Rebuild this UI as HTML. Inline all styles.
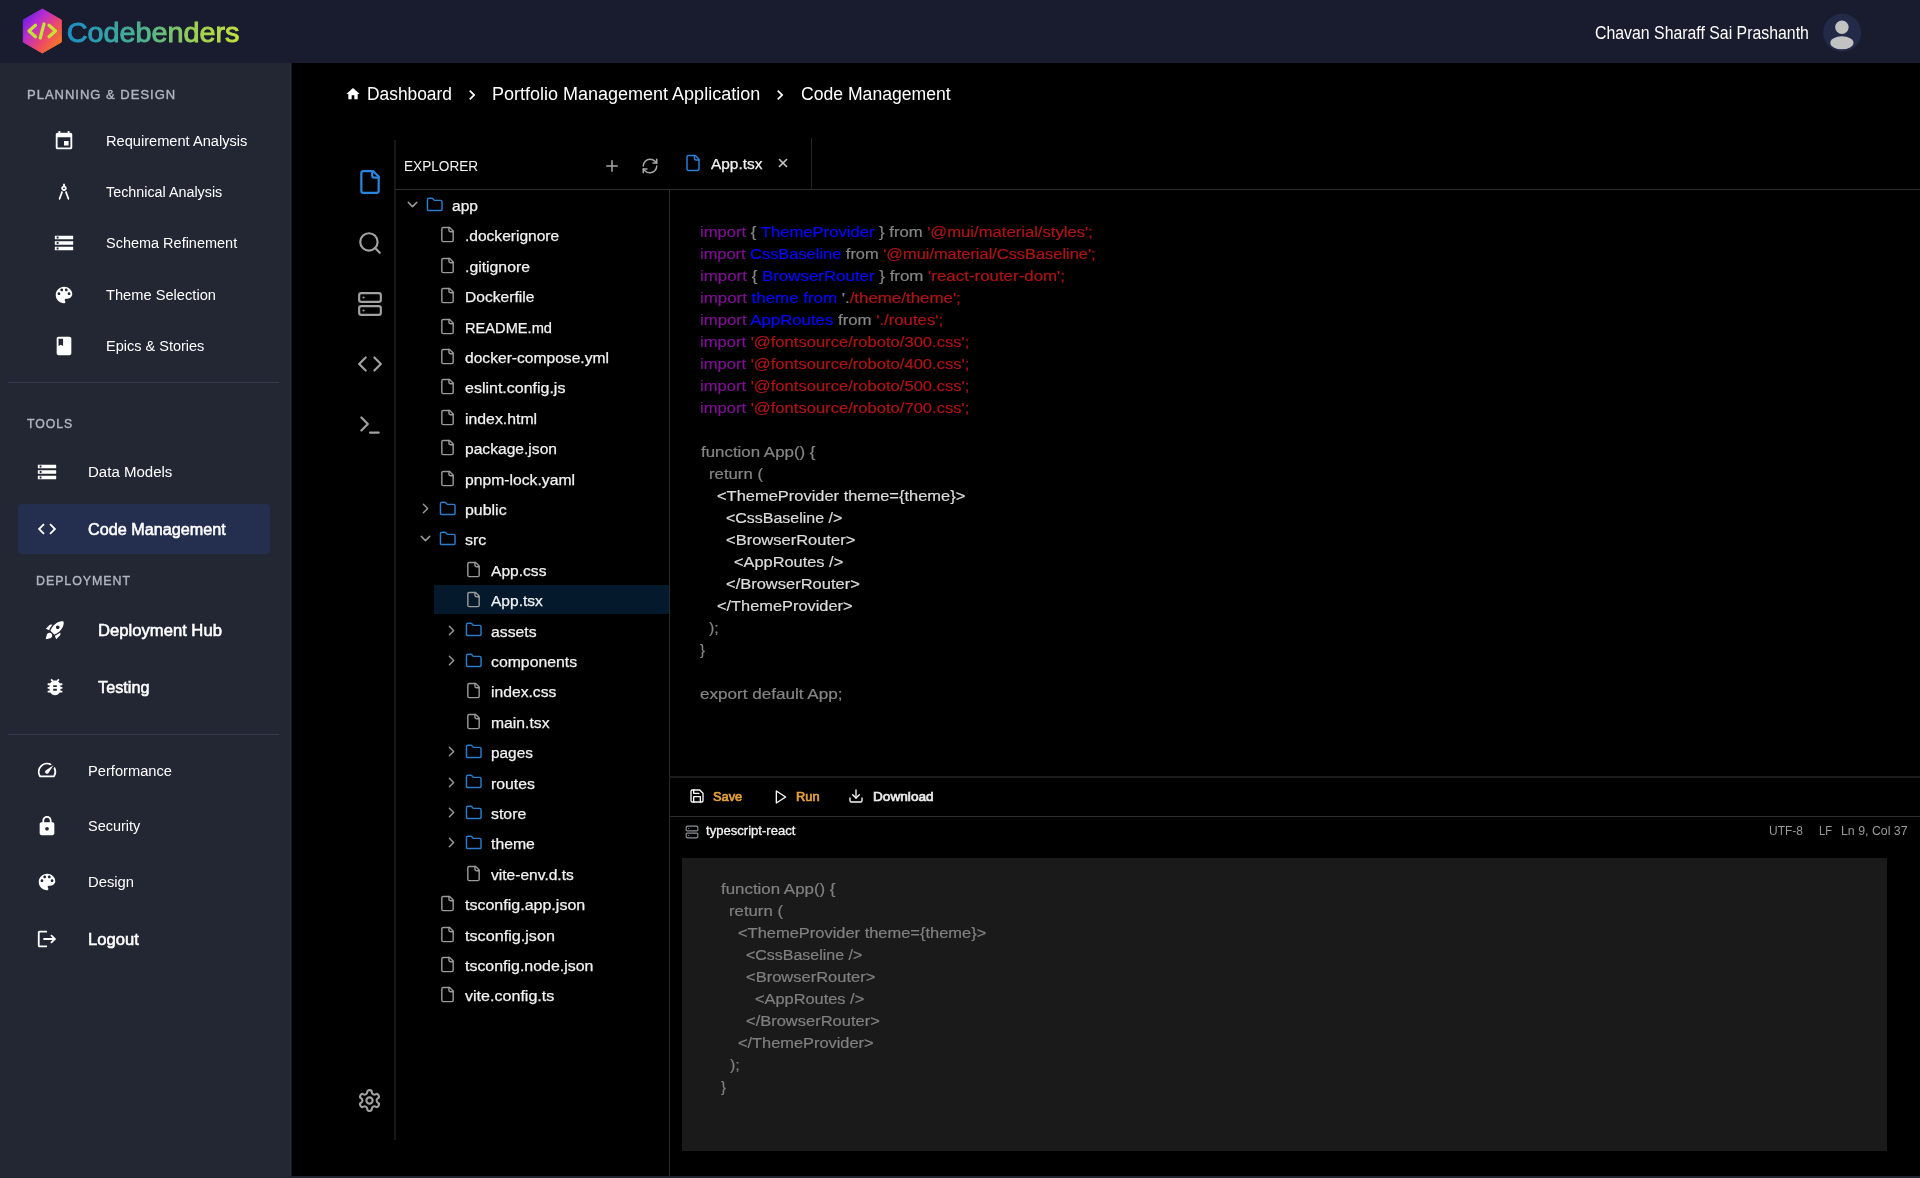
<!DOCTYPE html>
<html lang="en"><head><meta charset="utf-8"><title>Codebenders - Code Management</title>
<style>
*{box-sizing:border-box;margin:0;padding:0}
html,body{width:1920px;height:1178px;overflow:hidden;background:#000}
body{font-family:"Liberation Sans",sans-serif;position:relative;color:#fff}
.abs{position:absolute}
.ic{position:absolute;display:block}
.t{position:absolute;height:40px;line-height:40px;white-space:pre;transform-origin:0 50%}
.ln{position:absolute;background:#2a2a2a}
#header{position:absolute;left:0;top:0;width:1920px;height:63px;background:#191c2e}
#sidebar{position:absolute;left:0;top:63px;width:291px;height:1115px;background:#222733;border-right:1px solid #2a303c}
.tr{-webkit-text-stroke-width:0.25px}.cd{-webkit-text-stroke-width:0.2px}.tb{font-weight:400 !important;-webkit-text-stroke-width:0.65px}.sbw{-webkit-text-stroke-width:0.3px}.nb{font-weight:400 !important;-webkit-text-stroke:0.55px #fff}.sh{font-weight:400 !important;-webkit-text-stroke:0.4px #b0b5c0}
.code{position:absolute;white-space:pre;font-size:16px;line-height:22px;letter-spacing:-0.1px}
.kw{color:#7d0f90}.id{color:#0606ff}.st{color:#ae1414}.gr{color:#868686}.wh{color:#dcdcdc}
#root{position:absolute;left:0;top:0;width:1920px;height:1178px;will-change:transform}
</style></head><body><div id="root">

<div id="header"></div>
<svg class="ic" style="left:16px;top:2px" width="60" height="58" viewBox="16 2 60 58">
<defs><linearGradient id="hg" x1="24" y1="16" x2="61" y2="46" gradientUnits="userSpaceOnUse">
<stop offset="0" stop-color="#6a1fe6"/><stop offset="0.3" stop-color="#b82cd0"/><stop offset="0.65" stop-color="#ee4a66"/><stop offset="1" stop-color="#f8801a"/></linearGradient>
<linearGradient id="tg" x1="66" y1="0" x2="240" y2="0" gradientUnits="userSpaceOnUse">
<stop offset="0" stop-color="#1a8ec6"/><stop offset="0.45" stop-color="#4fb38c"/><stop offset="0.75" stop-color="#9fd152"/><stop offset="1" stop-color="#c4e23e"/></linearGradient></defs>
<path d="M42.3 9 L61.3 19.900 L61.300 42.100 L42.300 53 L23.300 42.100 L23.300 19.900 Z" fill="url(#hg)" stroke="url(#hg)" stroke-width="1" stroke-linejoin="round"/>
<g fill="none" stroke="#c6e234" stroke-width="3.200" stroke-linecap="round" stroke-linejoin="round"><path d="M35.500 25.200 L29 31 L35.500 36.800"/><path d="M44 24 L40.200 38"/><path d="M49 25.200 L55.500 31 L49 36.800"/></g>
</svg>
<svg class="ic" style="left:60px;top:8px" width="190" height="46" viewBox="60 8 190 46"><text x="66.7" y="41.5" font-family="'Liberation Sans',sans-serif" font-size="27" font-weight="400" fill="url(#tg)" stroke="url(#tg)" stroke-width="0.9" textLength="172.8" lengthAdjust="spacingAndGlyphs">Codebenders</text></svg>
<div class="t" style="left:1595.20px;top:13.00px;font-size:17.5px;color:#fff;transform:scaleX(0.9060);">Chavan Sharaff Sai Prashanth</div>
<svg class="ic" style="left:1820px;top:10px" width="46" height="46" viewBox="1820 10 46 46"><circle cx="1842.2" cy="32.700" r="19" fill="#222a48"/><circle cx="1841.900" cy="27.300" r="6.700" fill="#c2c2c2"/><ellipse cx="1841.900" cy="42.800" rx="11.600" ry="6.500" fill="#c2c2c2"/></svg>
<div id="sidebar"></div><div class="abs" style="left:291px;top:63px;width:1px;height:1113px;background:#11141a"></div>
<div class="t sh" style="left:27.00px;top:74.50px;font-size:13px;color:#b0b5c0;font-weight:700;letter-spacing:1.000px;">PLANNING &amp; DESIGN</div>
<svg class="ic" style="left:53.00px;top:129.50px" width="22" height="22" viewBox="0 0 24 24" fill="#fff"><path d="M17 12h-5v5h5v-5zM16 1v2H8V1H6v2H5c-1.11 0-1.99.9-1.99 2L3 19c0 1.1.89 2 2 2h14c1.1 0 2-.9 2-2V5c0-1.1-.9-2-2-2h-1V1h-2zm3 18H5V8h14v11z"/></svg>
<div class="t nv" style="left:106.20px;top:120.80px;font-size:15.5px;color:#fff;transform:scaleX(0.9429);">Requirement Analysis</div>
<svg class="ic" style="left:53.00px;top:180.80px" width="22" height="22" viewBox="0 0 24 24" fill="#fff"><path d="M6.36 18.78 6.61 21l1.62-1.54 2.77-7.6c-.68-.17-1.28-.51-1.77-.98l-2.87 7.9zM14.77 10.88c-.49.47-1.1.81-1.77.98l2.77 7.6L17.39 21l.26-2.22-2.88-7.9zM15 8c0-1.3-.84-2.4-2-2.82V3h-2v2.18C9.84 5.6 9 6.7 9 8c0 1.66 1.34 3 3 3s3-1.34 3-3zm-3 1c-.55 0-1-.45-1-1s.45-1 1-1 1 .45 1 1-.45 1-1 1z"/></svg>
<div class="t nv" style="left:106.20px;top:172.10px;font-size:15.5px;color:#fff;transform:scaleX(0.9242);">Technical Analysis</div>
<svg class="ic" style="left:53.00px;top:232.10px" width="22" height="22" viewBox="0 0 24 24" fill="#fff"><path d="M2 20h20v-4H2v4zm2-3h2v2H4v-2zM2 4v4h20V4H2zm4 3H4V5h2v2zm-4 7h20v-4H2v4zm2-3h2v2H4v-2z"/></svg>
<div class="t nv" style="left:106.20px;top:223.40px;font-size:15.5px;color:#fff;transform:scaleX(0.9339);">Schema Refinement</div>
<svg class="ic" style="left:53.00px;top:283.50px" width="22" height="22" viewBox="0 0 24 24" fill="#fff"><path d="M12 3c-4.97 0-9 4.03-9 9s4.03 9 9 9c.83 0 1.5-.67 1.5-1.5 0-.39-.15-.74-.39-1.01-.23-.26-.38-.61-.38-.99 0-.83.67-1.5 1.5-1.5H16c2.76 0 5-2.24 5-5 0-4.42-4.03-8-9-8zm-5.5 9c-.83 0-1.5-.67-1.5-1.5S5.67 9 6.5 9 8 9.67 8 10.500 7.33 12 6.500 12zm3-4C8.670 8 8 7.330 8 6.500S8.670 5 9.500 5s1.500.67 1.500 1.500S10.330 8 9.500 8zm5 0c-.83 0-1.500-.67-1.500-1.500S13.670 5 14.500 5s1.500.67 1.500 1.500S15.330 8 14.500 8zm3 4c-.83 0-1.500-.67-1.500-1.500S16.670 9 17.500 9s1.500.67 1.500 1.500-.67 1.500-1.500 1.500z"/></svg>
<div class="t nv" style="left:106.20px;top:274.80px;font-size:15.5px;color:#fff;transform:scaleX(0.9451);">Theme Selection</div>
<svg class="ic" style="left:53.00px;top:334.80px" width="22" height="22" viewBox="0 0 24 24" fill="#fff"><path d="M18 2H6c-1.1 0-2 .9-2 2v16c0 1.1.9 2 2 2h12c1.1 0 2-.9 2-2V4c0-1.1-.9-2-2-2zM6 4h5v8l-2.5-1.5L6 12V4z"/></svg>
<div class="t nv" style="left:106.20px;top:326.10px;font-size:15.5px;color:#fff;transform:scaleX(0.9359);">Epics &amp; Stories</div>
<div class="ln" style="left:8px;top:382px;width:271px;height:1px;background:#353b48"></div>
<div class="t sh" style="left:27.00px;top:403.50px;font-size:13px;color:#b0b5c0;font-weight:700;letter-spacing:1.000px;transform:scaleX(0.9432);">TOOLS</div>
<svg class="ic" style="left:35.50px;top:461.00px" width="22" height="22" viewBox="0 0 24 24" fill="#fff"><path d="M2 20h20v-4H2v4zm2-3h2v2H4v-2zM2 4v4h20V4H2zm4 3H4V5h2v2zm-4 7h20v-4H2v4zm2-3h2v2H4v-2z"/></svg>
<div class="t nv" style="left:88.40px;top:451.80px;font-size:15.5px;color:#fff;transform:scaleX(0.9696);">Data Models</div>
<div class="abs" style="left:18px;top:503.500px;width:252px;height:50px;border-radius:4px;background:#242f4f"></div>
<svg class="ic" style="left:35.50px;top:517.50px" width="22" height="22" viewBox="0 0 24 24" fill="#fff"><path d="M9.4 16.6 4.8 12l4.600-4.600L8 6l-6 6 6 6 1.400-1.400zm5.200 0 4.600-4.600-4.600-4.600L16 6l6 6-6 6-1.400-1.400z"/></svg>
<div class="t nb" style="left:88.40px;top:509.50px;font-size:16px;color:#fff;font-weight:700;transform:scaleX(1.0115);">Code Management</div>
<div class="t sh" style="left:35.50px;top:561.00px;font-size:13px;color:#b0b5c0;font-weight:700;letter-spacing:1.000px;transform:scaleX(0.9537);">DEPLOYMENT</div>
<svg class="ic" style="left:44.00px;top:618.50px" width="22" height="22" viewBox="0 0 24 24" fill="#fff"><path d="M9.19 6.35c-2.04 2.29-3.44 5.58-3.57 5.89L2 10.690l4.050-4.050c.47-.47 1.150-.68 1.810-.55l1.330.26zM11.170 17s3.740-1.550 5.890-3.700c5.400-5.400 4.500-9.620 4.210-10.570-.95-.3-5.170-1.190-10.570 4.210C8.550 9.090 7 12.830 7 12.830L11.170 17zm6.480-2.190c-2.290 2.040-5.580 3.440-5.890 3.570L13.310 22l4.050-4.050c.47-.47.68-1.150.55-1.810l-.26-1.330zM9 18c0 .83-.34 1.580-.88 2.120C6.940 21.300 2 22 2 22s.7-4.940 1.880-6.120C4.420 15.340 5.170 15 6 15c1.660 0 3 1.340 3 3zm4-9c0-1.100.9-2 2-2s2 .9 2 2-.9 2-2 2-2-.9-2-2z"/></svg>
<div class="t nb" style="left:97.60px;top:610.50px;font-size:16px;color:#fff;font-weight:700;transform:scaleX(1.0395);">Deployment Hub</div>
<svg class="ic" style="left:44.00px;top:676.00px" width="22" height="22" viewBox="0 0 24 24" fill="#fff"><path d="M20 8h-2.810c-.45-.78-1.070-1.450-1.820-1.960L17 4.410 15.590 3l-2.170 2.170C12.960 5.060 12.490 5 12 5c-.49 0-.96.06-1.410.17L8.410 3 7 4.410l1.620 1.630C7.880 6.550 7.260 7.220 6.810 8H4v2h2.090c-.05.33-.09.66-.09 1v1H4v2h2v1c0 .34.04.67.09 1H4v2h2.810c1.040 1.790 2.970 3 5.190 3s4.150-1.210 5.190-3H20v-2h-2.090c.05-.33.09-.66.09-1v-1h2v-2h-2v-1c0-.34-.04-.67-.09-1H20V8zm-6 8h-4v-2h4v2zm0-4h-4v-2h4v2z"/></svg>
<div class="t nb" style="left:97.60px;top:667.80px;font-size:16px;color:#fff;font-weight:700;transform:scaleX(1.0161);">Testing</div>
<div class="ln" style="left:8px;top:734px;width:271px;height:1px;background:#353b48"></div>
<svg class="ic" style="left:35.50px;top:759.00px" width="22" height="22" viewBox="0 0 24 24" fill="#fff"><path d="M20.38 8.57l-1.230 1.850a8 8 0 0 1-.22 7.580H5.070A8 8 0 0 1 15.580 6.850l1.850-1.230A10 10 0 0 0 3.350 19a2 2 0 0 0 1.720 1h13.850a2 2 0 0 0 1.740-1 10 10 0 0 0-.27-10.440zm-9.790 6.840a2 2 0 0 0 2.830 0l5.660-8.490-8.490 5.660a2 2 0 0 0 0 2.830z"/></svg>
<div class="t nv" style="left:88.40px;top:750.50px;font-size:15.5px;color:#fff;transform:scaleX(0.9466);">Performance</div>
<svg class="ic" style="left:35.50px;top:814.50px" width="22" height="22" viewBox="0 0 24 24" fill="#fff"><path d="M18 8h-1V6c0-2.760-2.240-5-5-5S7 3.240 7 6v2H6c-1.100 0-2 .9-2 2v10c0 1.100.9 2 2 2h12c1.100 0 2-.9 2-2V10c0-1.100-.9-2-2-2zm-6 9c-1.100 0-2-.9-2-2s.9-2 2-2 2 .9 2 2-.9 2-2 2zm3.100-9H8.900V6c0-1.710 1.390-3.100 3.100-3.100 1.710 0 3.100 1.390 3.100 3.100v2z"/></svg>
<div class="t nv" style="left:88.40px;top:806.30px;font-size:15.5px;color:#fff;transform:scaleX(0.9341);">Security</div>
<svg class="ic" style="left:35.50px;top:870.50px" width="22" height="22" viewBox="0 0 24 24" fill="#fff"><path d="M12 3c-4.97 0-9 4.03-9 9s4.03 9 9 9c.83 0 1.5-.67 1.5-1.5 0-.39-.15-.74-.39-1.01-.23-.26-.38-.61-.38-.99 0-.83.67-1.5 1.5-1.5H16c2.76 0 5-2.24 5-5 0-4.42-4.03-8-9-8zm-5.5 9c-.83 0-1.5-.67-1.5-1.5S5.67 9 6.5 9 8 9.67 8 10.500 7.33 12 6.500 12zm3-4C8.670 8 8 7.330 8 6.500S8.670 5 9.500 5s1.500.67 1.500 1.500S10.330 8 9.500 8zm5 0c-.83 0-1.500-.67-1.500-1.500S13.670 5 14.500 5s1.500.67 1.500 1.500S15.330 8 14.500 8zm3 4c-.83 0-1.500-.67-1.500-1.500S16.670 9 17.500 9s1.500.67 1.500 1.500-.67 1.500-1.500 1.500z"/></svg>
<div class="t nv" style="left:88.40px;top:862.40px;font-size:15.5px;color:#fff;transform:scaleX(0.9540);">Design</div>
<svg class="ic" style="left:35.50px;top:927.50px" width="22" height="22" viewBox="0 0 24 24" fill="#fff"><path d="M17 7l-1.410 1.410L18.170 11H8v2h10.170l-2.580 2.580L17 17l5-5zM4 5h8V3H4c-1.100 0-2 .9-2 2v14c0 1.100.9 2 2 2h8v-2H4V5z"/></svg>
<div class="t nb" style="left:88.40px;top:919.50px;font-size:16px;color:#fff;font-weight:700;transform:scaleX(1.0369);">Logout</div>
<svg class="ic" style="left:345.40px;top:85.50px" width="16" height="16" viewBox="0 0 24 24" fill="#fff"><path d="M10 20v-6h4v6h5v-8h3L12 3 2 12h3v8z"/></svg>
<div class="t bc" style="left:367.20px;top:73.90px;font-size:18px;color:#fff;transform:scaleX(0.9650);">Dashboard</div>
<svg class="ic" style="left:461.50px;top:84.50px" width="20" height="20" viewBox="0 0 24 24" fill="#fff"><path d="M10 6 8.590 7.410 13.170 12l-4.580 4.590L10 18l6-6z"/></svg>
<div class="t bc" style="left:492.00px;top:73.90px;font-size:18px;color:#fff;">Portfolio Management Application</div>
<svg class="ic" style="left:770.20px;top:84.50px" width="20" height="20" viewBox="0 0 24 24" fill="#fff"><path d="M10 6 8.590 7.410 13.170 12l-4.580 4.590L10 18l6-6z"/></svg>
<div class="t bc" style="left:800.50px;top:73.90px;font-size:18px;color:#fff;transform:scaleX(0.9774);">Code Management</div>
<div class="ln" style="left:394px;top:140px;width:2px;height:1000px;background:#171717"></div>
<div class="ln" style="left:395px;top:189px;width:1525px;height:1px;background:#2d2d2d"></div>
<div class="ln" style="left:669px;top:189px;width:1px;height:987px;background:#2a2a2a"></div>
<div class="ln" style="left:811px;top:138px;width:1px;height:51px;background:#242424"></div>
<div class="ln" style="left:669px;top:776px;width:1251px;height:2px;background:#1b1b1b"></div>
<div class="ln" style="left:669px;top:816px;width:1251px;height:1px;background:#2e2e2e"></div>
<div class="ln" style="left:288px;top:1176px;width:1632px;height:2px;background:#22252f"></div>
<svg class="ic" style="left:356.60px;top:168.70px" width="26" height="26" viewBox="0 0 24 24" fill="none" stroke="#2a86e0" stroke-width="2" stroke-linecap="round" stroke-linejoin="round"><path d="M15 2H6a2 2 0 0 0-2 2v16a2 2 0 0 0 2 2h12a2 2 0 0 0 2-2V7Z"/><path d="M14 2v4a2 2 0 0 0 2 2h4"/></svg>
<svg class="ic" style="left:356.60px;top:229.70px" width="26" height="26" viewBox="0 0 24 24" fill="none" stroke="#a2a2a2" stroke-width="2" stroke-linecap="round" stroke-linejoin="round"><circle cx="11" cy="11" r="8"/><path d="m21 21-4.300-4.300"/></svg>
<svg class="ic" style="left:356.60px;top:290.70px" width="26" height="26" viewBox="0 0 24 24" fill="none" stroke="#a2a2a2" stroke-width="2" stroke-linecap="round" stroke-linejoin="round"><rect width="20" height="8" x="2" y="2" rx="2" ry="2"/><rect width="20" height="8" x="2" y="14" rx="2" ry="2"/><line x1="6" x2="6.010" y1="6" y2="6"/><line x1="6" x2="6.010" y1="18" y2="18"/></svg>
<svg class="ic" style="left:356.60px;top:351.30px" width="26" height="26" viewBox="0 0 24 24" fill="none" stroke="#a2a2a2" stroke-width="2" stroke-linecap="round" stroke-linejoin="round"><polyline points="16 18 22 12 16 6"/><polyline points="8 6 2 12 8 18"/></svg>
<svg class="ic" style="left:356.60px;top:411.80px" width="26" height="26" viewBox="0 0 24 24" fill="none" stroke="#a2a2a2" stroke-width="2" stroke-linecap="round" stroke-linejoin="round"><polyline points="4 17 10 11 4 5"/><line x1="12" x2="20" y1="19" y2="19"/></svg>
<svg class="ic" style="left:356.90px;top:1088.10px" width="25" height="25" viewBox="0 0 24 24" fill="none" stroke="#a2a2a2" stroke-width="2" stroke-linecap="round" stroke-linejoin="round"><path d="M12.220 2h-.44a2 2 0 0 0-2 2v.18a2 2 0 0 1-1 1.730l-.43.25a2 2 0 0 1-2 0l-.15-.08a2 2 0 0 0-2.730.73l-.22.38a2 2 0 0 0 .73 2.730l.15.1a2 2 0 0 1 1 1.720v.51a2 2 0 0 1-1 1.740l-.15.09a2 2 0 0 0-.73 2.730l.22.38a2 2 0 0 0 2.730.73l.15-.08a2 2 0 0 1 2 0l.43.25a2 2 0 0 1 1 1.730V20a2 2 0 0 0 2 2h.44a2 2 0 0 0 2-2v-.18a2 2 0 0 1 1-1.730l.43-.25a2 2 0 0 1 2 0l.15.08a2 2 0 0 0 2.730-.73l.22-.39a2 2 0 0 0-.73-2.730l-.15-.08a2 2 0 0 1-1-1.740v-.5a2 2 0 0 1 1-1.740l.15-.09a2 2 0 0 0 .73-2.730l-.22-.38a2 2 0 0 0-2.730-.73l-.15.08a2 2 0 0 1-2 0l-.43-.25a2 2 0 0 1-1-1.730V4a2 2 0 0 0-2-2z"/><circle cx="12" cy="12" r="3"/></svg>
<div class="t ex" style="left:404.30px;top:145.70px;font-size:15.5px;color:#f2f2f2;transform:scaleX(0.8786);">EXPLORER</div>
<svg class="ic" style="left:603.20px;top:156.60px" width="18" height="18" viewBox="0 0 24 24" fill="none" stroke="#a8a8a8" stroke-width="2" stroke-linecap="round" stroke-linejoin="round"><path d="M5 12h14"/><path d="M12 5v14"/></svg>
<svg class="ic" style="left:640.70px;top:156.60px" width="18" height="18" viewBox="0 0 24 24" fill="none" stroke="#a8a8a8" stroke-width="2" stroke-linecap="round" stroke-linejoin="round"><path d="M3 12a9 9 0 0 1 9-9 9.750 9.750 0 0 1 6.740 2.740L21 8"/><path d="M21 3v5h-5"/><path d="M21 12a9 9 0 0 1-9 9 9.750 9.750 0 0 1-6.740-2.740L3 16"/><path d="M8 16H3v5"/></svg>
<svg class="ic" style="left:684.10px;top:154.10px" width="18" height="18" viewBox="0 0 24 24" fill="none" stroke="#2a7fd4" stroke-width="2" stroke-linecap="round" stroke-linejoin="round"><path d="M15 2H6a2 2 0 0 0-2 2v16a2 2 0 0 0 2 2h12a2 2 0 0 0 2-2V7Z"/><path d="M14 2v4a2 2 0 0 0 2 2h4"/></svg>
<div class="t tr" style="left:710.80px;top:143.60px;font-size:15.2px;color:#f2f2f2;transform:scaleX(1.0160);">App.tsx</div>
<svg class="ic" style="left:775.90px;top:155.50px" width="14" height="14" viewBox="0 0 24 24" fill="none" stroke="#c4c4c4" stroke-width="2.8" stroke-linecap="round" stroke-linejoin="round"><path d="M18 6 6 18"/><path d="m6 6 12 12"/></svg>
<svg class="ic" style="left:404.00px;top:196.00px" width="17" height="17" viewBox="0 0 24 24" fill="none" stroke="#9a9a9a" stroke-width="2" stroke-linecap="round" stroke-linejoin="round"><path d="m6 9 6 6 6-6"/></svg>
<svg class="ic" style="left:425.75px;top:195.65px" width="17.5" height="17.5" viewBox="0 0 24 24" fill="none" stroke="#2a7ccc" stroke-width="2" stroke-linecap="round" stroke-linejoin="round"><path d="M20 20a2 2 0 0 0 2-2V8a2 2 0 0 0-2-2h-7.900a2 2 0 0 1-1.690-.9L9.600 3.900A2 2 0 0 0 7.930 3H4a2 2 0 0 0-2 2v13a2 2 0 0 0 2 2Z"/></svg>
<div class="t tr" style="left:452.00px;top:185.90px;font-size:15.2px;color:#f2f2f2;transform:scaleX(1.0224);">app</div>
<svg class="ic" style="left:439.00px;top:226.40px" width="17" height="17" viewBox="0 0 24 24" fill="none" stroke="#9a9a9a" stroke-width="2" stroke-linecap="round" stroke-linejoin="round"><path d="M15 2H6a2 2 0 0 0-2 2v16a2 2 0 0 0 2 2h12a2 2 0 0 0 2-2V7Z"/><path d="M14 2v4a2 2 0 0 0 2 2h4"/></svg>
<div class="t tr" style="left:464.80px;top:216.30px;font-size:15.2px;color:#f2f2f2;transform:scaleX(1.0232);">.dockerignore</div>
<svg class="ic" style="left:439.00px;top:256.80px" width="17" height="17" viewBox="0 0 24 24" fill="none" stroke="#9a9a9a" stroke-width="2" stroke-linecap="round" stroke-linejoin="round"><path d="M15 2H6a2 2 0 0 0-2 2v16a2 2 0 0 0 2 2h12a2 2 0 0 0 2-2V7Z"/><path d="M14 2v4a2 2 0 0 0 2 2h4"/></svg>
<div class="t tr" style="left:464.80px;top:246.70px;font-size:15.2px;color:#f2f2f2;transform:scaleX(1.0402);">.gitignore</div>
<svg class="ic" style="left:439.00px;top:287.20px" width="17" height="17" viewBox="0 0 24 24" fill="none" stroke="#9a9a9a" stroke-width="2" stroke-linecap="round" stroke-linejoin="round"><path d="M15 2H6a2 2 0 0 0-2 2v16a2 2 0 0 0 2 2h12a2 2 0 0 0 2-2V7Z"/><path d="M14 2v4a2 2 0 0 0 2 2h4"/></svg>
<div class="t tr" style="left:464.80px;top:277.10px;font-size:15.2px;color:#f2f2f2;transform:scaleX(1.0275);">Dockerfile</div>
<svg class="ic" style="left:439.00px;top:317.60px" width="17" height="17" viewBox="0 0 24 24" fill="none" stroke="#9a9a9a" stroke-width="2" stroke-linecap="round" stroke-linejoin="round"><path d="M15 2H6a2 2 0 0 0-2 2v16a2 2 0 0 0 2 2h12a2 2 0 0 0 2-2V7Z"/><path d="M14 2v4a2 2 0 0 0 2 2h4"/></svg>
<div class="t tr" style="left:464.80px;top:307.50px;font-size:15.2px;color:#f2f2f2;transform:scaleX(0.9630);">README.md</div>
<svg class="ic" style="left:439.00px;top:348.00px" width="17" height="17" viewBox="0 0 24 24" fill="none" stroke="#9a9a9a" stroke-width="2" stroke-linecap="round" stroke-linejoin="round"><path d="M15 2H6a2 2 0 0 0-2 2v16a2 2 0 0 0 2 2h12a2 2 0 0 0 2-2V7Z"/><path d="M14 2v4a2 2 0 0 0 2 2h4"/></svg>
<div class="t tr" style="left:464.80px;top:337.90px;font-size:15.2px;color:#f2f2f2;transform:scaleX(1.0272);">docker-compose.yml</div>
<svg class="ic" style="left:439.00px;top:378.40px" width="17" height="17" viewBox="0 0 24 24" fill="none" stroke="#9a9a9a" stroke-width="2" stroke-linecap="round" stroke-linejoin="round"><path d="M15 2H6a2 2 0 0 0-2 2v16a2 2 0 0 0 2 2h12a2 2 0 0 0 2-2V7Z"/><path d="M14 2v4a2 2 0 0 0 2 2h4"/></svg>
<div class="t tr" style="left:464.80px;top:368.30px;font-size:15.2px;color:#f2f2f2;transform:scaleX(1.0527);">eslint.config.js</div>
<svg class="ic" style="left:439.00px;top:408.80px" width="17" height="17" viewBox="0 0 24 24" fill="none" stroke="#9a9a9a" stroke-width="2" stroke-linecap="round" stroke-linejoin="round"><path d="M15 2H6a2 2 0 0 0-2 2v16a2 2 0 0 0 2 2h12a2 2 0 0 0 2-2V7Z"/><path d="M14 2v4a2 2 0 0 0 2 2h4"/></svg>
<div class="t tr" style="left:464.80px;top:398.70px;font-size:15.2px;color:#f2f2f2;transform:scaleX(1.0414);">index.html</div>
<svg class="ic" style="left:439.00px;top:439.20px" width="17" height="17" viewBox="0 0 24 24" fill="none" stroke="#9a9a9a" stroke-width="2" stroke-linecap="round" stroke-linejoin="round"><path d="M15 2H6a2 2 0 0 0-2 2v16a2 2 0 0 0 2 2h12a2 2 0 0 0 2-2V7Z"/><path d="M14 2v4a2 2 0 0 0 2 2h4"/></svg>
<div class="t tr" style="left:464.80px;top:429.10px;font-size:15.2px;color:#f2f2f2;transform:scaleX(1.0279);">package.json</div>
<svg class="ic" style="left:439.00px;top:469.60px" width="17" height="17" viewBox="0 0 24 24" fill="none" stroke="#9a9a9a" stroke-width="2" stroke-linecap="round" stroke-linejoin="round"><path d="M15 2H6a2 2 0 0 0-2 2v16a2 2 0 0 0 2 2h12a2 2 0 0 0 2-2V7Z"/><path d="M14 2v4a2 2 0 0 0 2 2h4"/></svg>
<div class="t tr" style="left:464.80px;top:459.50px;font-size:15.2px;color:#f2f2f2;transform:scaleX(1.0339);">pnpm-lock.yaml</div>
<svg class="ic" style="left:417.00px;top:500.00px" width="17" height="17" viewBox="0 0 24 24" fill="none" stroke="#9a9a9a" stroke-width="2" stroke-linecap="round" stroke-linejoin="round"><path d="m9 18 6-6-6-6"/></svg>
<svg class="ic" style="left:439.25px;top:499.65px" width="17.5" height="17.5" viewBox="0 0 24 24" fill="none" stroke="#2a7ccc" stroke-width="2" stroke-linecap="round" stroke-linejoin="round"><path d="M20 20a2 2 0 0 0 2-2V8a2 2 0 0 0-2-2h-7.900a2 2 0 0 1-1.690-.9L9.600 3.900A2 2 0 0 0 7.930 3H4a2 2 0 0 0-2 2v13a2 2 0 0 0 2 2Z"/></svg>
<div class="t tr" style="left:464.80px;top:489.90px;font-size:15.2px;color:#f2f2f2;transform:scaleX(1.0487);">public</div>
<svg class="ic" style="left:417.00px;top:530.40px" width="17" height="17" viewBox="0 0 24 24" fill="none" stroke="#9a9a9a" stroke-width="2" stroke-linecap="round" stroke-linejoin="round"><path d="m6 9 6 6 6-6"/></svg>
<svg class="ic" style="left:439.25px;top:530.05px" width="17.5" height="17.5" viewBox="0 0 24 24" fill="none" stroke="#2a7ccc" stroke-width="2" stroke-linecap="round" stroke-linejoin="round"><path d="M20 20a2 2 0 0 0 2-2V8a2 2 0 0 0-2-2h-7.900a2 2 0 0 1-1.690-.9L9.600 3.900A2 2 0 0 0 7.930 3H4a2 2 0 0 0-2 2v13a2 2 0 0 0 2 2Z"/></svg>
<div class="t tr" style="left:464.80px;top:520.30px;font-size:15.2px;color:#f2f2f2;transform:scaleX(1.0537);">src</div>
<svg class="ic" style="left:465.00px;top:560.80px" width="17" height="17" viewBox="0 0 24 24" fill="none" stroke="#9a9a9a" stroke-width="2" stroke-linecap="round" stroke-linejoin="round"><path d="M15 2H6a2 2 0 0 0-2 2v16a2 2 0 0 0 2 2h12a2 2 0 0 0 2-2V7Z"/><path d="M14 2v4a2 2 0 0 0 2 2h4"/></svg>
<div class="t tr" style="left:490.90px;top:550.70px;font-size:15.2px;color:#f2f2f2;transform:scaleX(1.0262);">App.css</div>
<div class="abs" style="left:434px;top:584.5px;width:235px;height:29.6px;background:#04192c"></div>
<svg class="ic" style="left:465.00px;top:591.20px" width="17" height="17" viewBox="0 0 24 24" fill="none" stroke="#9a9a9a" stroke-width="2" stroke-linecap="round" stroke-linejoin="round"><path d="M15 2H6a2 2 0 0 0-2 2v16a2 2 0 0 0 2 2h12a2 2 0 0 0 2-2V7Z"/><path d="M14 2v4a2 2 0 0 0 2 2h4"/></svg>
<div class="t tr" style="left:490.90px;top:581.10px;font-size:15.2px;color:#f2f2f2;transform:scaleX(1.0238);">App.tsx</div>
<svg class="ic" style="left:443.00px;top:621.60px" width="17" height="17" viewBox="0 0 24 24" fill="none" stroke="#9a9a9a" stroke-width="2" stroke-linecap="round" stroke-linejoin="round"><path d="m9 18 6-6-6-6"/></svg>
<svg class="ic" style="left:465.25px;top:621.25px" width="17.5" height="17.5" viewBox="0 0 24 24" fill="none" stroke="#2a7ccc" stroke-width="2" stroke-linecap="round" stroke-linejoin="round"><path d="M20 20a2 2 0 0 0 2-2V8a2 2 0 0 0-2-2h-7.900a2 2 0 0 1-1.690-.9L9.600 3.900A2 2 0 0 0 7.930 3H4a2 2 0 0 0-2 2v13a2 2 0 0 0 2 2Z"/></svg>
<div class="t tr" style="left:490.90px;top:611.50px;font-size:15.2px;color:#f2f2f2;transform:scaleX(1.0379);">assets</div>
<svg class="ic" style="left:443.00px;top:652.00px" width="17" height="17" viewBox="0 0 24 24" fill="none" stroke="#9a9a9a" stroke-width="2" stroke-linecap="round" stroke-linejoin="round"><path d="m9 18 6-6-6-6"/></svg>
<svg class="ic" style="left:465.25px;top:651.65px" width="17.5" height="17.5" viewBox="0 0 24 24" fill="none" stroke="#2a7ccc" stroke-width="2" stroke-linecap="round" stroke-linejoin="round"><path d="M20 20a2 2 0 0 0 2-2V8a2 2 0 0 0-2-2h-7.900a2 2 0 0 1-1.690-.9L9.600 3.900A2 2 0 0 0 7.930 3H4a2 2 0 0 0-2 2v13a2 2 0 0 0 2 2Z"/></svg>
<div class="t tr" style="left:490.90px;top:641.90px;font-size:15.2px;color:#f2f2f2;transform:scaleX(1.0409);">components</div>
<svg class="ic" style="left:465.00px;top:682.40px" width="17" height="17" viewBox="0 0 24 24" fill="none" stroke="#9a9a9a" stroke-width="2" stroke-linecap="round" stroke-linejoin="round"><path d="M15 2H6a2 2 0 0 0-2 2v16a2 2 0 0 0 2 2h12a2 2 0 0 0 2-2V7Z"/><path d="M14 2v4a2 2 0 0 0 2 2h4"/></svg>
<div class="t tr" style="left:490.90px;top:672.30px;font-size:15.2px;color:#f2f2f2;transform:scaleX(1.0320);">index.css</div>
<svg class="ic" style="left:465.00px;top:712.80px" width="17" height="17" viewBox="0 0 24 24" fill="none" stroke="#9a9a9a" stroke-width="2" stroke-linecap="round" stroke-linejoin="round"><path d="M15 2H6a2 2 0 0 0-2 2v16a2 2 0 0 0 2 2h12a2 2 0 0 0 2-2V7Z"/><path d="M14 2v4a2 2 0 0 0 2 2h4"/></svg>
<div class="t tr" style="left:490.90px;top:702.70px;font-size:15.2px;color:#f2f2f2;transform:scaleX(1.0355);">main.tsx</div>
<svg class="ic" style="left:443.00px;top:743.20px" width="17" height="17" viewBox="0 0 24 24" fill="none" stroke="#9a9a9a" stroke-width="2" stroke-linecap="round" stroke-linejoin="round"><path d="m9 18 6-6-6-6"/></svg>
<svg class="ic" style="left:465.25px;top:742.85px" width="17.5" height="17.5" viewBox="0 0 24 24" fill="none" stroke="#2a7ccc" stroke-width="2" stroke-linecap="round" stroke-linejoin="round"><path d="M20 20a2 2 0 0 0 2-2V8a2 2 0 0 0-2-2h-7.900a2 2 0 0 1-1.690-.9L9.600 3.900A2 2 0 0 0 7.930 3H4a2 2 0 0 0-2 2v13a2 2 0 0 0 2 2Z"/></svg>
<div class="t tr" style="left:490.90px;top:733.10px;font-size:15.2px;color:#f2f2f2;transform:scaleX(1.0113);">pages</div>
<svg class="ic" style="left:443.00px;top:773.60px" width="17" height="17" viewBox="0 0 24 24" fill="none" stroke="#9a9a9a" stroke-width="2" stroke-linecap="round" stroke-linejoin="round"><path d="m9 18 6-6-6-6"/></svg>
<svg class="ic" style="left:465.25px;top:773.25px" width="17.5" height="17.5" viewBox="0 0 24 24" fill="none" stroke="#2a7ccc" stroke-width="2" stroke-linecap="round" stroke-linejoin="round"><path d="M20 20a2 2 0 0 0 2-2V8a2 2 0 0 0-2-2h-7.900a2 2 0 0 1-1.690-.9L9.600 3.900A2 2 0 0 0 7.930 3H4a2 2 0 0 0-2 2v13a2 2 0 0 0 2 2Z"/></svg>
<div class="t tr" style="left:490.90px;top:763.50px;font-size:15.2px;color:#f2f2f2;transform:scaleX(1.0414);">routes</div>
<svg class="ic" style="left:443.00px;top:804.00px" width="17" height="17" viewBox="0 0 24 24" fill="none" stroke="#9a9a9a" stroke-width="2" stroke-linecap="round" stroke-linejoin="round"><path d="m9 18 6-6-6-6"/></svg>
<svg class="ic" style="left:465.25px;top:803.65px" width="17.5" height="17.5" viewBox="0 0 24 24" fill="none" stroke="#2a7ccc" stroke-width="2" stroke-linecap="round" stroke-linejoin="round"><path d="M20 20a2 2 0 0 0 2-2V8a2 2 0 0 0-2-2h-7.900a2 2 0 0 1-1.690-.9L9.600 3.900A2 2 0 0 0 7.930 3H4a2 2 0 0 0-2 2v13a2 2 0 0 0 2 2Z"/></svg>
<div class="t tr" style="left:490.90px;top:793.90px;font-size:15.2px;color:#f2f2f2;transform:scaleX(1.0459);">store</div>
<svg class="ic" style="left:443.00px;top:834.40px" width="17" height="17" viewBox="0 0 24 24" fill="none" stroke="#9a9a9a" stroke-width="2" stroke-linecap="round" stroke-linejoin="round"><path d="m9 18 6-6-6-6"/></svg>
<svg class="ic" style="left:465.25px;top:834.05px" width="17.5" height="17.5" viewBox="0 0 24 24" fill="none" stroke="#2a7ccc" stroke-width="2" stroke-linecap="round" stroke-linejoin="round"><path d="M20 20a2 2 0 0 0 2-2V8a2 2 0 0 0-2-2h-7.900a2 2 0 0 1-1.690-.9L9.600 3.900A2 2 0 0 0 7.930 3H4a2 2 0 0 0-2 2v13a2 2 0 0 0 2 2Z"/></svg>
<div class="t tr" style="left:490.90px;top:824.30px;font-size:15.2px;color:#f2f2f2;transform:scaleX(1.0401);">theme</div>
<svg class="ic" style="left:465.00px;top:864.80px" width="17" height="17" viewBox="0 0 24 24" fill="none" stroke="#9a9a9a" stroke-width="2" stroke-linecap="round" stroke-linejoin="round"><path d="M15 2H6a2 2 0 0 0-2 2v16a2 2 0 0 0 2 2h12a2 2 0 0 0 2-2V7Z"/><path d="M14 2v4a2 2 0 0 0 2 2h4"/></svg>
<div class="t tr" style="left:490.90px;top:854.70px;font-size:15.2px;color:#f2f2f2;transform:scaleX(1.0256);">vite-env.d.ts</div>
<svg class="ic" style="left:439.00px;top:895.20px" width="17" height="17" viewBox="0 0 24 24" fill="none" stroke="#9a9a9a" stroke-width="2" stroke-linecap="round" stroke-linejoin="round"><path d="M15 2H6a2 2 0 0 0-2 2v16a2 2 0 0 0 2 2h12a2 2 0 0 0 2-2V7Z"/><path d="M14 2v4a2 2 0 0 0 2 2h4"/></svg>
<div class="t tr" style="left:464.80px;top:885.10px;font-size:15.2px;color:#f2f2f2;transform:scaleX(1.0546);">tsconfig.app.json</div>
<svg class="ic" style="left:439.00px;top:925.60px" width="17" height="17" viewBox="0 0 24 24" fill="none" stroke="#9a9a9a" stroke-width="2" stroke-linecap="round" stroke-linejoin="round"><path d="M15 2H6a2 2 0 0 0-2 2v16a2 2 0 0 0 2 2h12a2 2 0 0 0 2-2V7Z"/><path d="M14 2v4a2 2 0 0 0 2 2h4"/></svg>
<div class="t tr" style="left:464.80px;top:915.50px;font-size:15.2px;color:#f2f2f2;transform:scaleX(1.0653);">tsconfig.json</div>
<svg class="ic" style="left:439.00px;top:956.00px" width="17" height="17" viewBox="0 0 24 24" fill="none" stroke="#9a9a9a" stroke-width="2" stroke-linecap="round" stroke-linejoin="round"><path d="M15 2H6a2 2 0 0 0-2 2v16a2 2 0 0 0 2 2h12a2 2 0 0 0 2-2V7Z"/><path d="M14 2v4a2 2 0 0 0 2 2h4"/></svg>
<div class="t tr" style="left:464.80px;top:945.90px;font-size:15.2px;color:#f2f2f2;transform:scaleX(1.0495);">tsconfig.node.json</div>
<svg class="ic" style="left:439.00px;top:986.40px" width="17" height="17" viewBox="0 0 24 24" fill="none" stroke="#9a9a9a" stroke-width="2" stroke-linecap="round" stroke-linejoin="round"><path d="M15 2H6a2 2 0 0 0-2 2v16a2 2 0 0 0 2 2h12a2 2 0 0 0 2-2V7Z"/><path d="M14 2v4a2 2 0 0 0 2 2h4"/></svg>
<div class="t tr" style="left:464.80px;top:976.30px;font-size:15.2px;color:#f2f2f2;transform:scaleX(1.0582);">vite.config.ts</div>
<div class="t cd" style="left:699.98px;top:212.37px;font-size:15.2px;color:#868686;transform:scaleX(1.0954);"><span class="kw">import</span><span class="gr"> { </span><span class="id">ThemeProvider</span><span class="gr"> } from </span><span class="st">&#x27;@mui/material/styles&#x27;;</span></div>
<div class="t cd" style="left:699.99px;top:234.37px;font-size:15.2px;color:#868686;transform:scaleX(1.0797);"><span class="kw">import </span><span class="id">CssBaseline</span><span class="gr"> from </span><span class="st">&#x27;@mui/material/CssBaseline&#x27;;</span></div>
<div class="t cd" style="left:699.97px;top:256.37px;font-size:15.2px;color:#868686;transform:scaleX(1.1121);"><span class="kw">import</span><span class="gr"> { </span><span class="id">BrowserRouter</span><span class="gr"> } from </span><span class="st">&#x27;react-router-dom&#x27;;</span></div>
<div class="t cd" style="left:699.97px;top:278.37px;font-size:15.2px;color:#868686;transform:scaleX(1.1119);"><span class="kw">import </span><span class="id">theme from </span><span class="gr">&#x27;.</span><span class="st">/theme/theme&#x27;;</span></div>
<div class="t cd" style="left:699.97px;top:300.37px;font-size:15.2px;color:#868686;transform:scaleX(1.1042);"><span class="kw">import </span><span class="id">AppRoutes</span><span class="gr"> from </span><span class="st">&#x27;./routes&#x27;;</span></div>
<div class="t cd" style="left:699.98px;top:322.37px;font-size:15.2px;color:#868686;transform:scaleX(1.0922);"><span class="kw">import </span><span class="st">&#x27;@fontsource/roboto/300.css&#x27;;</span></div>
<div class="t cd" style="left:699.98px;top:344.37px;font-size:15.2px;color:#868686;transform:scaleX(1.0922);"><span class="kw">import </span><span class="st">&#x27;@fontsource/roboto/400.css&#x27;;</span></div>
<div class="t cd" style="left:699.98px;top:366.37px;font-size:15.2px;color:#868686;transform:scaleX(1.0922);"><span class="kw">import </span><span class="st">&#x27;@fontsource/roboto/500.css&#x27;;</span></div>
<div class="t cd" style="left:699.98px;top:388.37px;font-size:15.2px;color:#868686;transform:scaleX(1.0922);"><span class="kw">import </span><span class="st">&#x27;@fontsource/roboto/700.css&#x27;;</span></div>
<div class="t cd" style="left:700.50px;top:432.37px;font-size:15.2px;color:#868686;transform:scaleX(1.1113);"><span class="gr">function App() {</span></div>
<div class="t cd" style="left:708.57px;top:454.37px;font-size:15.2px;color:#868686;transform:scaleX(1.1024);"><span class="gr">return (</span></div>
<div class="t cd" style="left:717.31px;top:476.37px;font-size:15.2px;color:#868686;transform:scaleX(1.0832);"><span class="wh">&lt;ThemeProvider theme={theme}&gt;</span></div>
<div class="t cd" style="left:725.62px;top:498.37px;font-size:15.2px;color:#868686;transform:scaleX(1.0514);"><span class="wh">&lt;CssBaseline /&gt;</span></div>
<div class="t cd" style="left:725.61px;top:520.37px;font-size:15.2px;color:#868686;transform:scaleX(1.0871);"><span class="wh">&lt;BrowserRouter&gt;</span></div>
<div class="t cd" style="left:734.01px;top:542.37px;font-size:15.2px;color:#868686;transform:scaleX(1.0778);"><span class="wh">&lt;AppRoutes /&gt;</span></div>
<div class="t cd" style="left:725.61px;top:564.37px;font-size:15.2px;color:#868686;transform:scaleX(1.0856);"><span class="wh">&lt;/BrowserRouter&gt;</span></div>
<div class="t cd" style="left:717.31px;top:586.37px;font-size:15.2px;color:#868686;transform:scaleX(1.0779);"><span class="wh">&lt;/ThemeProvider&gt;</span></div>
<div class="t cd" style="left:709.10px;top:608.37px;font-size:15.2px;color:#868686;transform:scaleX(1.0553);"><span class="gr">);</span></div>
<div class="t cd" style="left:700.38px;top:630.37px;font-size:15.2px;color:#868686;transform:scaleX(0.9659);"><span class="gr">}</span></div>
<div class="t cd" style="left:700.23px;top:674.37px;font-size:15.2px;color:#868686;transform:scaleX(1.1250);"><span class="gr">export default App;</span></div>
<svg class="ic" style="left:688.50px;top:788.40px" width="16" height="16" viewBox="0 0 24 24" fill="none" stroke="#fafafa" stroke-width="2" stroke-linecap="round" stroke-linejoin="round"><path d="M19 21H5a2 2 0 0 1-2-2V5a2 2 0 0 1 2-2h11l5 5v11a2 2 0 0 1-2 2z"/><polyline points="17 21 17 13 7 13 7 21"/><polyline points="7 3 7 8 15 8"/></svg>
<div class="t tb" style="left:713.00px;top:776.50px;font-size:13px;color:#e8a33d;font-weight:700;transform:scaleX(0.9861);">Save</div>
<svg class="ic" style="left:772.50px;top:788.50px" width="16" height="16" viewBox="0 0 24 24" fill="none" stroke="#fafafa" stroke-width="2" stroke-linecap="round" stroke-linejoin="round"><polygon points="5 3 19 12 5 21 5 3"/></svg>
<div class="t tb" style="left:796.40px;top:776.50px;font-size:13px;color:#e8a33d;font-weight:700;transform:scaleX(0.9906);">Run</div>
<svg class="ic" style="left:848.30px;top:788.40px" width="16" height="16" viewBox="0 0 24 24" fill="none" stroke="#fafafa" stroke-width="2" stroke-linecap="round" stroke-linejoin="round"><path d="M21 15v4a2 2 0 0 1-2 2H5a2 2 0 0 1-2-2v-4"/><polyline points="7 10 12 15 17 10"/><line x1="12" x2="12" y1="15" y2="3"/></svg>
<div class="t tb" style="left:872.70px;top:776.50px;font-size:13px;color:#ececec;font-weight:700;transform:scaleX(1.0493);">Download</div>
<svg class="ic" style="left:685.00px;top:824.80px" width="14" height="14" viewBox="0 0 24 24" fill="none" stroke="#8c9494" stroke-width="2" stroke-linecap="round" stroke-linejoin="round"><rect width="20" height="8" x="2" y="2" rx="2" ry="2"/><rect width="20" height="8" x="2" y="14" rx="2" ry="2"/><line x1="6" x2="6.010" y1="6" y2="6"/><line x1="6" x2="6.010" y1="18" y2="18"/></svg>
<div class="t sb sbw" style="left:706.20px;top:811.30px;font-size:12.5px;color:#f4f4f4;transform:scaleX(1.0460);">typescript-react</div>
<div class="t sb" style="left:1768.80px;top:811.30px;font-size:12.5px;color:#9a9a9a;transform:scaleX(0.9567);">UTF-8</div>
<div class="t sb" style="left:1818.90px;top:811.30px;font-size:12.5px;color:#9a9a9a;transform:scaleX(0.9006);">LF</div>
<div class="t sb" style="left:1841.20px;top:811.30px;font-size:12.5px;color:#9a9a9a;transform:scaleX(0.9879);">Ln 9, Col 37</div>
<div class="abs" style="left:682px;top:858px;width:1205px;height:293px;background:#1a1a1a"></div>
<div class="t cd" style="left:721.30px;top:869.27px;font-size:15.2px;color:#808080;transform:scaleX(1.1113);">function App() {</div>
<div class="t cd" style="left:729.37px;top:891.27px;font-size:15.2px;color:#808080;transform:scaleX(1.1024);">return (</div>
<div class="t cd" style="left:738.11px;top:913.27px;font-size:15.2px;color:#808080;transform:scaleX(1.0832);">&lt;ThemeProvider theme={theme}&gt;</div>
<div class="t cd" style="left:746.42px;top:935.27px;font-size:15.2px;color:#808080;transform:scaleX(1.0514);">&lt;CssBaseline /&gt;</div>
<div class="t cd" style="left:746.41px;top:957.27px;font-size:15.2px;color:#808080;transform:scaleX(1.0871);">&lt;BrowserRouter&gt;</div>
<div class="t cd" style="left:754.81px;top:979.27px;font-size:15.2px;color:#808080;transform:scaleX(1.0778);">&lt;AppRoutes /&gt;</div>
<div class="t cd" style="left:746.41px;top:1001.27px;font-size:15.2px;color:#808080;transform:scaleX(1.0856);">&lt;/BrowserRouter&gt;</div>
<div class="t cd" style="left:738.11px;top:1023.27px;font-size:15.2px;color:#808080;transform:scaleX(1.0779);">&lt;/ThemeProvider&gt;</div>
<div class="t cd" style="left:729.90px;top:1045.27px;font-size:15.2px;color:#808080;transform:scaleX(1.0553);">);</div>
<div class="t cd" style="left:721.18px;top:1067.27px;font-size:15.2px;color:#808080;transform:scaleX(0.9659);">}</div>
</div></body></html>
